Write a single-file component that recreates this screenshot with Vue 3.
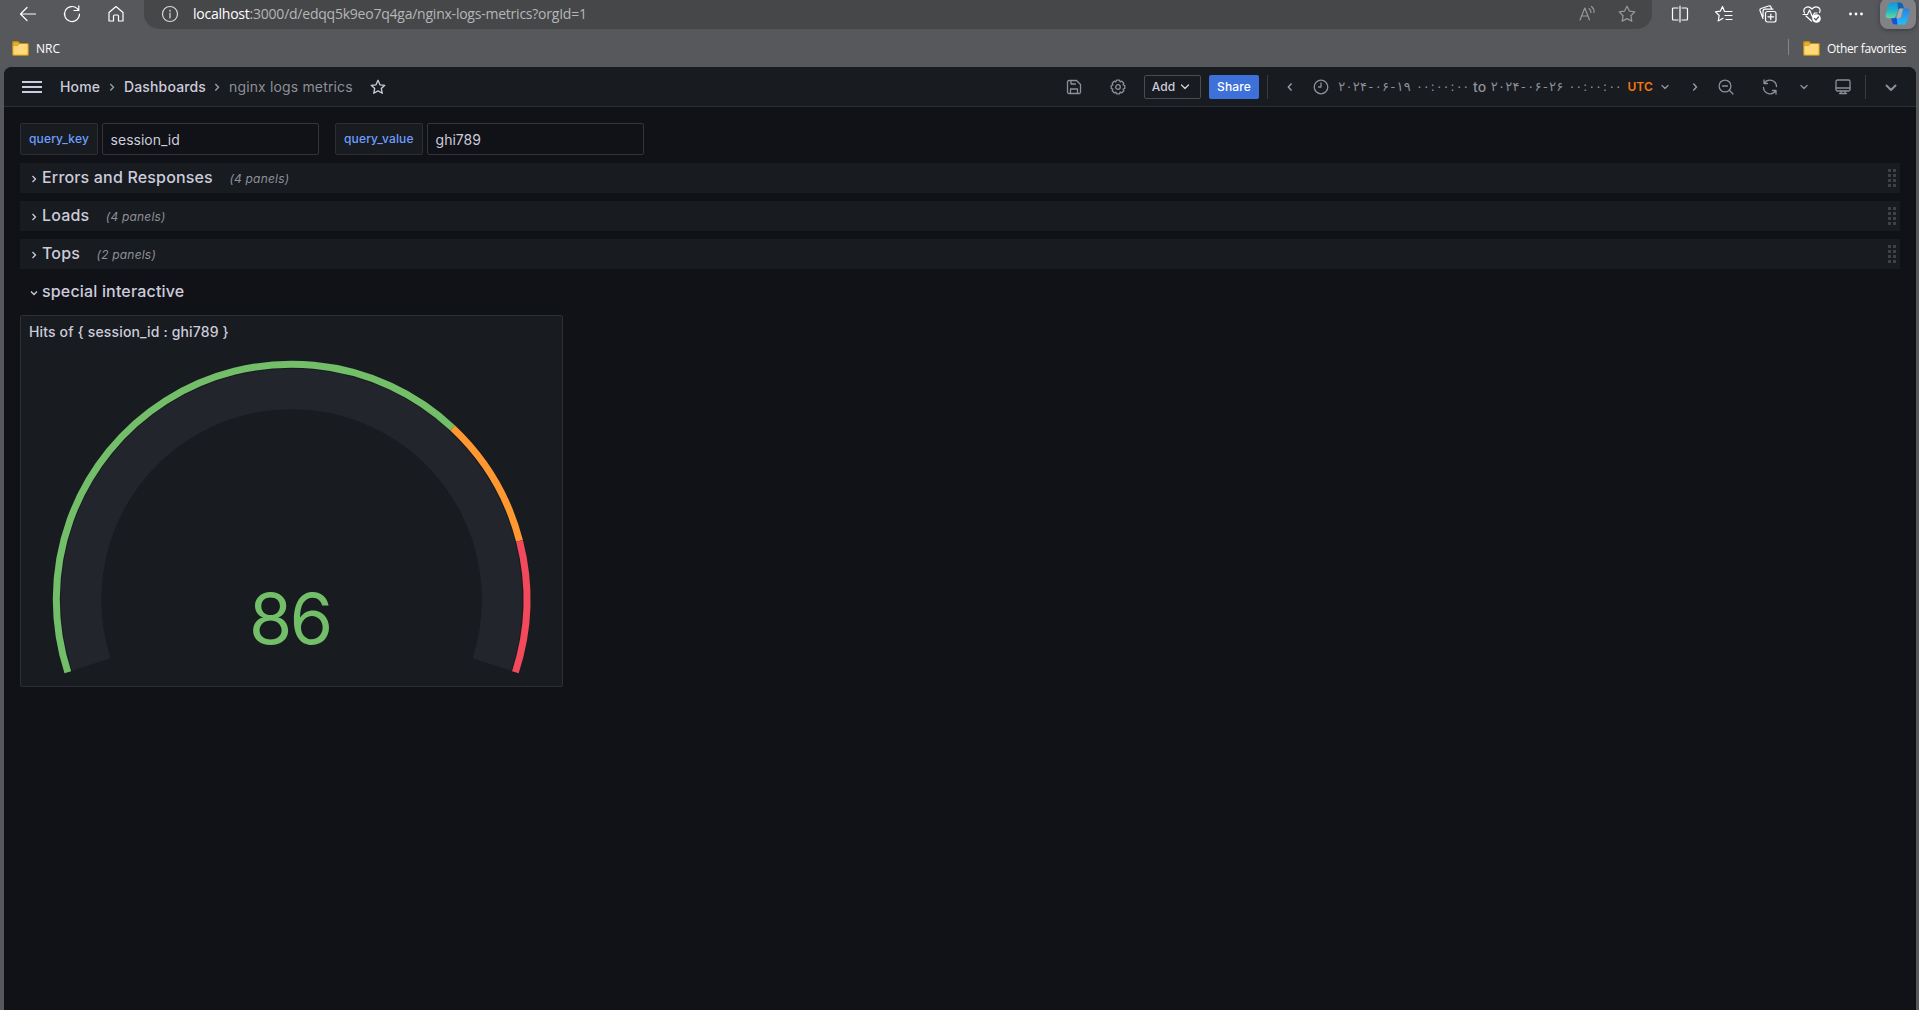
<script setup>
const rows = [
  { title: 'Errors and Responses', count: '(4 panels)' },
  { title: 'Loads', count: '(4 panels)' },
  { title: 'Tops', count: '(2 panels)' },
]
const variables = [
  { name: 'query_key', value: 'session_id', w: 78 },
  { name: 'query_value', value: 'ghi789', w: 88 },
]
const fromDate = [...'۲۰۲۴-۰۶-۱۹']
const toDate = [...'۲۰۲۴-۰۶-۲۶']
const midnight = [...'۰۰:۰۰:۰۰']

const cx = 270.6
const cy = 283.5
const point = (r, deg) => {
  const a = (deg * Math.PI) / 180
  return `${(cx + r * Math.cos(a)).toFixed(2)} ${(cy - r * Math.sin(a)).toFixed(2)}`
}
// Gauge sweeps 216 degrees clockwise, from 198 down to -18.
const arc = (r, from, to) => {
  const a = 198 - 216 * from
  const b = 198 - 216 * to
  return `M${point(r, a)} A${r} ${r} 0 ${a - b > 180 ? 1 : 0} 1 ${point(r, b)}`
}
const thresholds = [
  { color: '#73bf69', from: 0, to: 0.7 },
  { color: '#ff9830', from: 0.7, to: 0.85 },
  { color: '#f2495c', from: 0.85, to: 1 },
]
</script>

<template>
  <div class="browser">
    <header class="toolbar">
      <svg class="ci back" viewBox="0 0 20 20"><path d="M17.500 10H2.500M9 3.500L2.500 10L9 16.500" /></svg>
      <svg class="ci reload" viewBox="0 0 20 20"><path d="M17.500 10A7.500 7.500 0 1 1 15.300 4.700L16.700 6.300M16.800 1.800V6.500H12" /></svg>
      <svg class="ci house" viewBox="0 0 20 20"><path d="M3 8.500L10 2.500L17 8.500V17H12.500V12A1 1 0 0 0 11.500 11H8.500A1 1 0 0 0 7.500 12V17H3Z" /></svg>
      <div class="address">
        <svg class="ci info" viewBox="0 0 20 20"><circle cx="10" cy="10" r="7.500" /><path d="M10 9V14M10 6V7.300" /></svg>
        <span class="url"><b>localhost</b>:3000/d/edqq5k9eo7q4ga/nginx-logs-metrics?orgId=1</span>
        <svg class="ci dim read" viewBox="0 0 20 20"><path d="M3 16L7.800 4L12.500 16M4.800 12H11M12 4.500Q14 6 14 8.500M14.500 2.500Q17.500 5 17 8.500" /></svg>
        <svg class="ci dim" viewBox="0 0 20 20"><path d="M10 2.200L12.400 7.100L17.800 7.900L13.900 11.700L14.800 17.100L10 14.600L5.200 17.100L6.100 11.700L2.200 7.900L7.600 7.100Z" /></svg>
      </div>
      <div class="actions">
        <svg class="ci" viewBox="0 0 20 20"><path d="M8 4H3.500A1 1 0 0 0 2.500 5V15A1 1 0 0 0 3.500 16H8M12 4H16.500A1 1 0 0 1 17.500 5V15A1 1 0 0 1 16.500 16H12M10 2V18" /></svg>
        <svg class="ci" viewBox="0 0 20 20"><path d="M10.500 7.500L8.500 2.500L6.400 7.100L1.500 7.900L5.200 11.500L4.200 17L9 14.300M11.500 7.500H18M11 11.500H18M12 15.500H18" /></svg>
        <svg class="ci" viewBox="0 0 20 20"><rect x="7.500" y="7.500" width="10.500" height="10.500" rx="2" /><path d="M12.800 10V15.600M10 12.800H15.600M5 14.500L2 6.500Q1.500 5 3 4.500L10.500 2Q12.300 1.500 13 3L13.600 5M5 12.500V7.500Q5 5.200 7 5.200H15" /></svg>
        <svg class="ci" viewBox="0 0 20 20"><path d="M2.500 9C0 4 6 .5 10 5C14 .5 20 4 17.500 8.500M4 12L9.500 17M1 10.500H5.500L7.500 6L10.500 13L12.500 9H15" /><circle cx="14.500" cy="14.500" r="4.300" fill="#fff" stroke="none" /><path d="M12.500 14.500L14 16L16.500 13" style="stroke: #57585c" /></svg>
        <svg class="ci" viewBox="0 0 20 20"><g fill="#fff" stroke="none"><circle cx="4.500" cy="10" r="1.400" /><circle cx="10" cy="10" r="1.400" /><circle cx="15.500" cy="10" r="1.400" /></g></svg>
      </div>
      <div class="copilot">
        <svg viewBox="0 0 26 24">
          <defs>
            <linearGradient id="cg1" x1="0" y1="0" x2="0" y2="1"><stop offset="0" stop-color="#1794dc" /><stop offset=".5" stop-color="#1fb5cc" /><stop offset="1" stop-color="#66d892" /></linearGradient>
            <linearGradient id="cg2" x1="0" y1="0" x2="0" y2="1"><stop offset="0" stop-color="#2a7fe6" /><stop offset="1" stop-color="#22c0f7" /></linearGradient>
          </defs>
          <path d="M7 .5H15Q18 .5 18.800 3.500L19.800 6.500H16.500Q14 6.500 13.200 9L11.500 14Q10.300 17 7.500 17H3.500Q0 17 .7 13Q1.700 8 3.200 4Q4.300 .5 7 .5Z" fill="url(#cg1)" />
          <path d="M13 .5H15Q18 .5 18.800 3.500L19.800 6.500H16.500Q14.500 6.500 13.600 8Z" fill="#1463ad" />
          <path d="M20 6.500H22.500Q26 6.500 25.400 10.500Q24.400 15.500 22.900 20Q21.700 23.500 19 23.500H10.500Q8 23.500 7.300 20.500L6.500 17H8.500Q11.500 17 12.500 14L13 12.500L15.500 17H16.500Q17.300 17 17.600 16L18.500 9Q18.800 6.500 20 6.500Z" fill="url(#cg2)" />
          <path d="M6.500 17H8.500Q11 17 12 15.300L13 23.500H10.500Q8 23.500 7.300 20.500Z" fill="#1b4fd6" />
          <path d="M15.200 7H18.700L16.700 15Q16.200 17 14.500 17H11.200Q12.200 16 12.700 14Z" fill="#a9aeb3" />
        </svg>
      </div>
    </header>
    <nav class="bookmarks">
      <svg class="folder" viewBox="0 0 17 15"><path d="M.7 13V1.700Q.7.7 1.700.7H6L7.500 2.500H15.300Q16.300 2.500 16.300 3.500V13.300Q16.300 14.300 15.300 14.300H1.700Q.7 14.300.7 13Z" fill="#ffd97a" stroke="#bd8c16" stroke-width="1.200" /><path d="M1.300 1.300H6L7 2.800L5.800 4.300H1.300Z" fill="#f2b61f" stroke="#bd8c16" stroke-width=".7" /></svg>
      <span class="nrc">NRC</span>
      <i class="split"></i>
      <svg class="folder" viewBox="0 0 17 15"><path d="M.7 13V1.700Q.7.7 1.700.7H6L7.500 2.500H15.300Q16.300 2.500 16.300 3.500V13.300Q16.300 14.300 15.300 14.300H1.700Q.7 14.300.7 13Z" fill="#ffd97a" stroke="#bd8c16" stroke-width="1.200" /><path d="M1.300 1.300H6L7 2.800L5.800 4.300H1.300Z" fill="#f2b61f" stroke="#bd8c16" stroke-width=".7" /></svg>
      <span class="other">Other favorites</span>
    </nav>

    <main class="app">
      <div class="topnav">
        <div class="burger"><i></i><i></i><i></i></div>
        <div class="crumbs">
          <span class="home">Home</span>
          <svg class="chev" viewBox="0 0 8 10"><path d="M2.300 2L5.500 5.200L2.300 8.400" /></svg>
          <span class="dash">Dashboards</span>
          <svg class="chev" viewBox="0 0 8 10"><path d="M2.300 2L5.500 5.200L2.300 8.400" /></svg>
          <span class="cur">nginx logs metrics</span>
        </div>
        <svg class="gi star" viewBox="0 0 16 16"><path d="M8 1.300L10 5.800L14.800 6.300L11.300 9.500L12.300 14.300L8 11.900L3.700 14.300L4.700 9.500L1.200 6.300L6 5.800Z" /></svg>
        <div class="tools">
          <svg class="gi save" viewBox="0 0 16 16"><path d="M1.500 3A1.500 1.500 0 0 1 3 1.500H10.500L14.500 5.500V13A1.500 1.500 0 0 1 13 14.500H3A1.500 1.500 0 0 1 1.500 13ZM5 1.500V5H9.500M4.500 14.500V10H11.500V14.500" /></svg>
          <svg class="gi gear" viewBox="0 0 16 16"><path d="M6.500 1.200H9.500L10.100 2.900L11.800 2.200L13.800 4.200L13.100 5.900L14.800 6.500V9.500L13.100 10.100L13.800 11.800L11.800 13.800L10.100 13.100L9.500 14.800H6.500L5.900 13.100L4.200 13.800L2.200 11.800L2.900 10.100L1.200 9.500V6.500L2.900 5.900L2.200 4.200L4.200 2.200L5.900 2.900Z" /><circle cx="8" cy="8" r="2.300" /></svg>
          <button class="add">Add<svg class="dn" viewBox="0 0 10 8"><path d="M1.500 2L5 5.500L8.500 2" /></svg></button>
          <button class="share">Share</button>
          <i class="vline"></i>
          <svg class="chev left" viewBox="0 0 8 10"><path d="M5.500 1.500L2.300 5L5.500 8.500" /></svg>
          <svg class="gi clock" viewBox="0 0 16 16"><circle cx="8" cy="8" r="6.800" /><path d="M8 4V8H5.500" /></svg>
          <div class="range">
            <span class="fa">
              <span v-for="(c, i) in fromDate" :key="'d' + i" class="digit">{{ c }}</span>
              <span class="time"><span v-for="(c, i) in midnight" :key="'t' + i">{{ c }}</span></span>
            </span>
            <span class="to">to</span>
            <span class="fa second">
              <span v-for="(c, i) in toDate" :key="'d' + i" class="digit">{{ c }}</span>
              <span class="time"><span v-for="(c, i) in midnight" :key="'t' + i">{{ c }}</span></span>
            </span>
            <span class="utc">UTC</span>
          </div>
          <svg class="dn d1" viewBox="0 0 10 8"><path d="M2 2.500L5 5.500L8 2.500" /></svg>
          <svg class="chev right" viewBox="0 0 8 10"><path d="M2.300 1.500L5.500 5L2.300 8.500" /></svg>
          <svg class="gi zoomout" viewBox="0 0 16 16"><circle cx="7" cy="7" r="5.900" /><path d="M11.300 11.300L15 15M4.500 7H9.500" /></svg>
          <svg class="gi sync" viewBox="0 0 16 16"><path d="M2 1V4.500H5.500M2.300 4.300A6.600 6.600 0 0 1 14.500 7.500M14 15V11.500H10.500M13.700 11.700A6.600 6.600 0 0 1 1.500 8.500" /></svg>
          <svg class="dn d2" viewBox="0 0 10 8"><path d="M2 2.500L5 5.500L8 2.500" /></svg>
          <svg class="gi monitor" viewBox="0 0 16 16"><rect x="1" y="1" width="14" height="11" rx="1.500" /><path d="M1 9H15M6 12V14.500H10V12M4.500 14.500H11.500" /></svg>
          <i class="vline v2"></i>
          <svg class="dn big" viewBox="0 0 12 8"><path d="M1.500 1.500L6 6L10.500 1.500" /></svg>
        </div>
      </div>

      <section class="content">
        <div class="vars">
          <div v-for="v in variables" :key="v.name" class="var">
            <label :style="{ width: v.w + 'px' }">{{ v.name }}</label>
            <div class="field">{{ v.value }}</div>
          </div>
        </div>
        <div v-for="r in rows" :key="r.title" class="row">
          <svg class="caret" viewBox="0 0 8 10"><path d="M2.500 2L5.500 5L2.500 8" /></svg>
          <span class="title">{{ r.title }}</span>
          <em>{{ r.count }}</em>
          <span class="grip"><i v-for="n in 8" :key="n"></i></span>
        </div>
        <div class="row open">
          <svg class="caret" viewBox="0 0 8 10"><path d="M1 3.500L4 6.500L7 3.500" /></svg>
          <span class="title">special interactive</span>
        </div>
        <article class="panel">
          <h2>Hits of { session_id : ghi789 }</h2>
          <svg class="gauge" viewBox="0 35 541 335">
            <path :d="arc(210.5, 0, 1)" fill="none" stroke="#22252b" stroke-width="40.500" />
            <path v-for="t in thresholds" :key="t.color" :d="arc(235.300, t.from, t.to)" fill="none" :stroke="t.color" stroke-width="7" />
            <text x="268.800" y="327.500" text-anchor="middle">86</text>
          </svg>
        </article>
      </section>
    </main>
  </div>
</template>

<style>
body { background: #57585c; overflow: hidden; }
</style>

<style scoped>
* { box-sizing: border-box; }
svg { display: block; flex: none; }
.browser { width: 1919px; height: 1010px; background: #57585c; font-family: Inter, sans-serif; overflow: hidden; display: flex; flex-direction: column; }
.toolbar { height: 30px; flex: none; display: flex; align-items: flex-start; }
.ci { width: 20px; height: 20px; fill: none; stroke: #fff; stroke-width: 1.2; margin-top: 4px; stroke-linecap: round; stroke-linejoin: round; }
.back { margin-left: 18px; }
.reload { margin-left: 24px; }
.house { margin-left: 24px; }
.address { margin-left: 18px; width: 1508px; height: 29px; background: #464749; border-radius: 0 0 15px 15px; display: flex; }
.info { margin-left: 16px; stroke: #d8d8d8; }
.url { font: 14px/28px "Open Sans", sans-serif; letter-spacing: -.23px; color: #b5b6b8; margin-left: 13px; margin-right: auto; white-space: nowrap; }
.url b { color: #fff; font-weight: 400; }
.dim { stroke: #97989b; margin-right: 15px; }
.read { margin-right: 20px; }
.actions { display: flex; gap: 24.200px; margin-left: 17.500px; }
.copilot { width: 36px; height: 31px; margin-left: 13.700px; margin-top: -2px; border-radius: 8px; background: #818286; box-shadow: 0 1px 4px #2228; display: flex; align-items: center; justify-content: center; }
.copilot svg { width: 25px; height: 23px; }
.bookmarks { height: 37px; flex: none; display: flex; align-items: center; padding: 0 12px; color: #fff; font: 12px/16px "Open Sans", sans-serif; white-space: nowrap; }
.folder { width: 17px; height: 15px; }
.nrc { margin-left: 7px; margin-right: auto; }
.split { width: 1px; height: 16px; background: #85868a; margin-right: 14px; margin-top: -4px; }
.other { margin-left: 7px; width: 80px; letter-spacing: -.34px; }
.app { width: 1912px; margin-left: 4px; flex: 1; background: #111217; border-radius: 8px 8px 0 0; overflow: hidden; letter-spacing: .15px; }
.topnav { height: 40px; background: #181b1f; border-bottom: 1px solid #2c2f34; display: flex; align-items: center; padding-left: 18px; color: #ccccdc; }
.burger { width: 20px; height: 12px; display: flex; flex-direction: column; justify-content: space-between; }
.burger i { height: 2px; background: #ccccdc; }
.crumbs { display: flex; align-items: center; margin-left: 18px; font: 500 14px/22px Inter, sans-serif; white-space: nowrap; }
.crumbs .home { width: 40px; }
.dash { width: 81px; }
.cur { color: #8e8f99; font-weight: 400; width: 124px; }
.chev { width: 8px; height: 10px; fill: none; stroke: #9a9ba6; stroke-width: 1.400; }
.crumbs .chev { margin: 1px 8px 0; }
.gi { width: 16px; height: 16px; fill: none; stroke: #8e8f99; stroke-width: 1.300; stroke-linejoin: round; stroke-linecap: round; }
.star { margin-left: 17px; stroke: #ccccdc; }
.tools { margin-left: auto; display: flex; align-items: center; }
button { font: 500 12px/22px Inter, sans-serif; letter-spacing: .15px; height: 24px; border-radius: 2px; padding: 0; display: flex; align-items: center; justify-content: center; }
.gear { margin-left: 28px; }
.add { width: 57px; margin-left: 18px; padding-right: 3px; background: transparent; border: 1px solid #4a4c53; color: #ccccdc; }
.add .dn { margin-left: 5px; stroke: #ccccdc; }
.share { width: 50px; margin-left: 8px; background: #3d71d9; border: 0; color: #fff; }
.dn { width: 10px; height: 8px; fill: none; stroke: #8e8f99; stroke-width: 1.400; stroke-linecap: round; stroke-linejoin: round; }
.vline { width: 1px; height: 24px; background: #393b41; margin-left: 8px; }
.left { margin-left: 18px; }
.clock { margin-left: 19px; }
.range { width: 315px; margin-left: 9px; display: flex; align-items: center; font: 500 12px/20px Inter, sans-serif; color: #8e8f99; white-space: nowrap; }
.fa { display: flex; font-family: "DejaVu Sans", sans-serif; font-size: 13px; font-weight: 400; letter-spacing: 0; width: 135px; flex: none; direction: ltr; }
.fa.second { width: 137px; }
.digit { width: 7.300px; display: flex; justify-content: center; }
.time { display: flex; margin-left: 5.300px; }
.time span { width: 6.600px; display: flex; justify-content: center; }
.to { font-size: 14px; width: 17.500px; flex: none; }
.utc { color: #f5760f; font-weight: 600; letter-spacing: 0; }
.d1 { margin-left: 7px; }
.right { margin-left: 21px; }
.zoomout { margin-left: 19px; }
.sync { margin-left: 28px; }
.d2 { margin-left: 21px; }
.monitor { margin-left: 26px; }
.v2 { margin-left: 14px; }
.big { width: 12px; margin: 2px 19px 0 19px; stroke-width: 2; }
.content { padding: 16px 16px 0; }
.vars { display: flex; gap: 16px; height: 32px; margin-bottom: 8px; }
.var { display: flex; gap: 4px; }
.var label { height: 32px; border: 1px solid #2c2e34; border-radius: 2px; background: #181b1f; color: #6e9fff; font: 500 12px/30px Inter, sans-serif; padding-left: 8px; white-space: nowrap; }
.field { width: 217px; height: 32px; border: 1px solid #33353b; border-radius: 2px; background: #111217; color: #ccccdc; font: 14px/32px Inter, sans-serif; letter-spacing: 0; padding-left: 7.600px; }
.row { width: 1880px; height: 30px; margin-bottom: 8px; background: #181b1f; display: flex; align-items: center; padding-left: 10px; color: #ccccdc; }
.row.open { background: transparent; }
.caret { width: 8px; height: 10px; margin-top: 2px; fill: none; stroke: #ccccdc; stroke-width: 1.300; }
.title { font: 500 16px/30px Inter, sans-serif; margin-left: 4px; margin-top: -2px; letter-spacing: .17px; white-space: nowrap; }
em { font: italic 12px/30px Inter, sans-serif; color: #8e8f99; margin-left: 16.500px; margin-top: 2px; letter-spacing: .2px; }
.grip { margin-left: auto; margin-right: 4px; display: grid; grid-template-columns: 3px 3px; gap: 2.3px 2px; }
.grip i { width: 3px; height: 3px; background: #404144; }
.panel { width: 543px; height: 372px; border: 1px solid #2c2f34; border-radius: 2px; background: #181b1f; }
h2 { margin: 0; padding-left: 8px; height: 35px; font: 500 14px/32px Inter, sans-serif; letter-spacing: .15px; color: #ccccdc; }
.gauge { width: 541px; height: 335px; }
.gauge text { font: 70px Inter, sans-serif; letter-spacing: -2.500px; fill: #73bf69; }
</style>
